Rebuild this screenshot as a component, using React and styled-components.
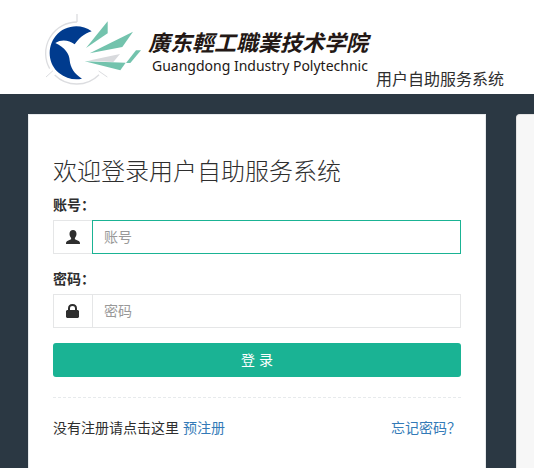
import React, {useState} from 'react'
import styled, {createGlobalStyle, css} from 'styled-components'

const GlobalStyle = createGlobalStyle`
   *, *::before, *::after {
      box-sizing: border-box;
   }
   body {
      margin: 0;
      background-color: #2b3843;
      color: #2e2e2e;
      font-family: 'Liberation Sans', 'Noto Sans CJK SC', sans-serif;
      font-size: 14px;
      line-height: 20px;
   }
`;

const Page = styled.div`
   display: flex;
   flex-direction: column;
   height: 100vh;
   overflow: hidden;
`;

const Header = styled.header`
   display: flex;
   align-items: flex-end;
   height: 94px;
   padding: 0 28px 4px 44px;
   background-color: white;
   white-space: nowrap;
`;

const Brand = styled.div`
   display: flex;
   align-items: center;
   gap: 4px;
   padding-bottom: 4px;
`;

const Emblem = styled.svg`
   display: block;
   width: 100px;
   height: 73px;
`;

const SchoolName = styled.div`
   color: #231815;
`;

const NativeName = styled.div`
   font-family: 'Noto Sans CJK SC', sans-serif;
   font-size: 22px;
   font-weight: 700;
   font-style: italic;
   line-height: 32px;
`;

const EnglishName = styled.div`
   padding-left: 4px;
   font-family: 'Noto Sans', sans-serif;
   font-size: 14px;
   line-height: 18px;
`;

const SystemName = styled.span`
   margin-left: 8px;
   font-size: 16px;
`;

const Columns = styled.main`
   flex: 1;
   display: grid;
   grid-template-columns: minmax(0, 1fr) 18px;
   gap: 30px;
   padding: 20px 0 0 28px;
`;

const Panel = styled.section`
   padding: 44px 24px 24px;
   border: 1px solid #e7eaec;
   border-bottom: 0;
   background-color: white;
`;

const SidePanel = styled.aside`
   border: 1px solid #e3e3e3;
   border-width: 1px 0 0 1px;
   border-radius: 4px 0 0 0;
   background-color: #f7f7f7;
`;

const Title = styled.h1`
   margin: 0 0 10px;
   font-size: 24px;
   font-weight: 300;
   line-height: 26px;
`;

const Group = styled.div`
   margin-bottom: 15px;
`;

const Label = styled.label`
   display: block;
   margin-bottom: 5px;
   font-weight: 700;
`;

const InputGroup = styled.div`
   display: flex;
   height: 34px;
`;

const Addon = styled.span`
   display: flex;
   align-items: center;
   justify-content: center;
   width: 39px;
   border: 1px solid #e5e6e7;
   border-right: 0;
`;

const Input = styled.input`
   flex: 1;
   min-width: 0;
   padding: 6px 11px;
   border: 1px solid #e5e6e7;
   outline: none;
   background-color: white;
   color: inherit;
   font: inherit;
   ${props => props.$active && css`
      border-color: #1ab394;
   `}

   &::placeholder {
      color: #999;
      opacity: 1;
   }
`;

const Submit = styled.button`
   display: block;
   width: 100%;
   height: 34px;
   padding: 0;
   border: 0;
   border-radius: 3px;
   background-color: #1ab394;
   color: white;
   font: inherit;
   cursor: pointer;
`;

const Divider = styled.hr`
   margin: 20px 0;
   border: 0;
   border-top: 1px dashed #e7eaec;
`;

const Footer = styled.div`
   display: flex;
   justify-content: space-between;
   white-space: nowrap;
`;

const Link = styled.a`
   color: #337ab7;
   text-decoration: none;
`;

const Logo = () => (
   <Emblem viewBox="42 39 300 219" aria-hidden="true">
      <g fill="none" stroke="#dcdde0" strokeWidth="4">
         <path d="M141 42V66"/>
         <path d="M141 66A94 94 0 0 0 59 206"/>
         <path d="M74 225A94 94 0 0 0 207 224"/>
         <path d="M48 231L69 212M206 213L232 231" strokeWidth="3"/>
      </g>
      <path fill="#003b8e" d="M185 94C151 69 103 76 77 108C49 143 55 193 87 219C108 236 133 241 156 236C133 222 121 203 119 181C118 162 105 143 76 129C94 117 117 120 134 133C146 116 161 101 185 94Z"/>
      <g fill="#73c3ad">
         <path d="M168 144L233 64V100Z"/>
         <path d="M179 160L309 95L277 141Z"/>
         <path d="M164 184L287 188L271 211Z"/>
         <path d="M288 189L318 151H333L301 189Z"/>
      </g>
      <path fill="#d8dadd" d="M174 182L270 162L250 186Z"/>
   </Emblem>
);

const UserIcon = () => (
   <svg width="14" height="14" viewBox="0 0 14 14" fill="currentColor" aria-hidden="true">
      <path d="M7 0C4.900 0 3.500 1.400 3.500 3.700C3.500 5.400 4.100 6.900 5.100 7.900V9.300L1.300 11.100C.4 11.600 0 12.300 0 14H14C14 12.300 13.600 11.600 12.700 11.100L8.900 9.300V7.900C9.900 6.900 10.500 5.400 10.500 3.700C10.500 1.400 9.100 0 7 0Z"/>
   </svg>
);

const LockIcon = () => (
   <svg width="14" height="14" viewBox="0 0 14 14" fill="currentColor" aria-hidden="true">
      <path fillRule="evenodd" d="M2 6V4.500C2 1.700 3.500 0 6.500 0C9.500 0 11 1.700 11 4.500V6H12L13 7V13L12 14H1L0 13V7L1 6ZM4 6H9V4.500C9 2.800 8.200 2 6.500 2C4.800 2 4 2.800 4 4.500Z"/>
   </svg>
);

const Field = ({id, label, type, icon, active, onFocus}) => {
   const [value, setValue] = useState('');

   return(
      <Group>
         <Label htmlFor={id}>{label}：</Label>
         <InputGroup>
            <Addon>{icon}</Addon>
            <Input
               id={id}
               type={type}
               placeholder={label}
               value={value}
               $active={active}
               onFocus={onFocus}
               onChange={event => setValue(event.target.value)}
            />
         </InputGroup>
      </Group>
   );
}

const App = () => {
   const [active, setActive] = useState('account');

   return(
      <>
         <GlobalStyle/>
         <Page>
            <Header>
               <Brand>
                  <Logo/>
                  <SchoolName>
                     <NativeName>廣东輕工職業技术学院</NativeName>
                     <EnglishName>Guangdong Industry Polytechnic</EnglishName>
                  </SchoolName>
               </Brand>
               <SystemName>用户自助服务系统</SystemName>
            </Header>
            <Columns>
               <Panel>
                  <Title>欢迎登录用户自助服务系统</Title>
                  <form onSubmit={event => event.preventDefault()}>
                     <Field
                        id="account"
                        label="账号"
                        type="text"
                        icon={<UserIcon/>}
                        active={active === 'account'}
                        onFocus={() => setActive('account')}
                     />
                     <Field
                        id="password"
                        label="密码"
                        type="password"
                        icon={<LockIcon/>}
                        active={active === 'password'}
                        onFocus={() => setActive('password')}
                     />
                     <Submit type="submit">登 录</Submit>
                  </form>
                  <Divider/>
                  <Footer>
                     <span>没有注册请点击这里 <Link href="#register">预注册</Link></span>
                     <Link href="#forgot">忘记密码？</Link>
                  </Footer>
               </Panel>
               <SidePanel/>
            </Columns>
         </Page>
      </>
   );
}

export default App;
